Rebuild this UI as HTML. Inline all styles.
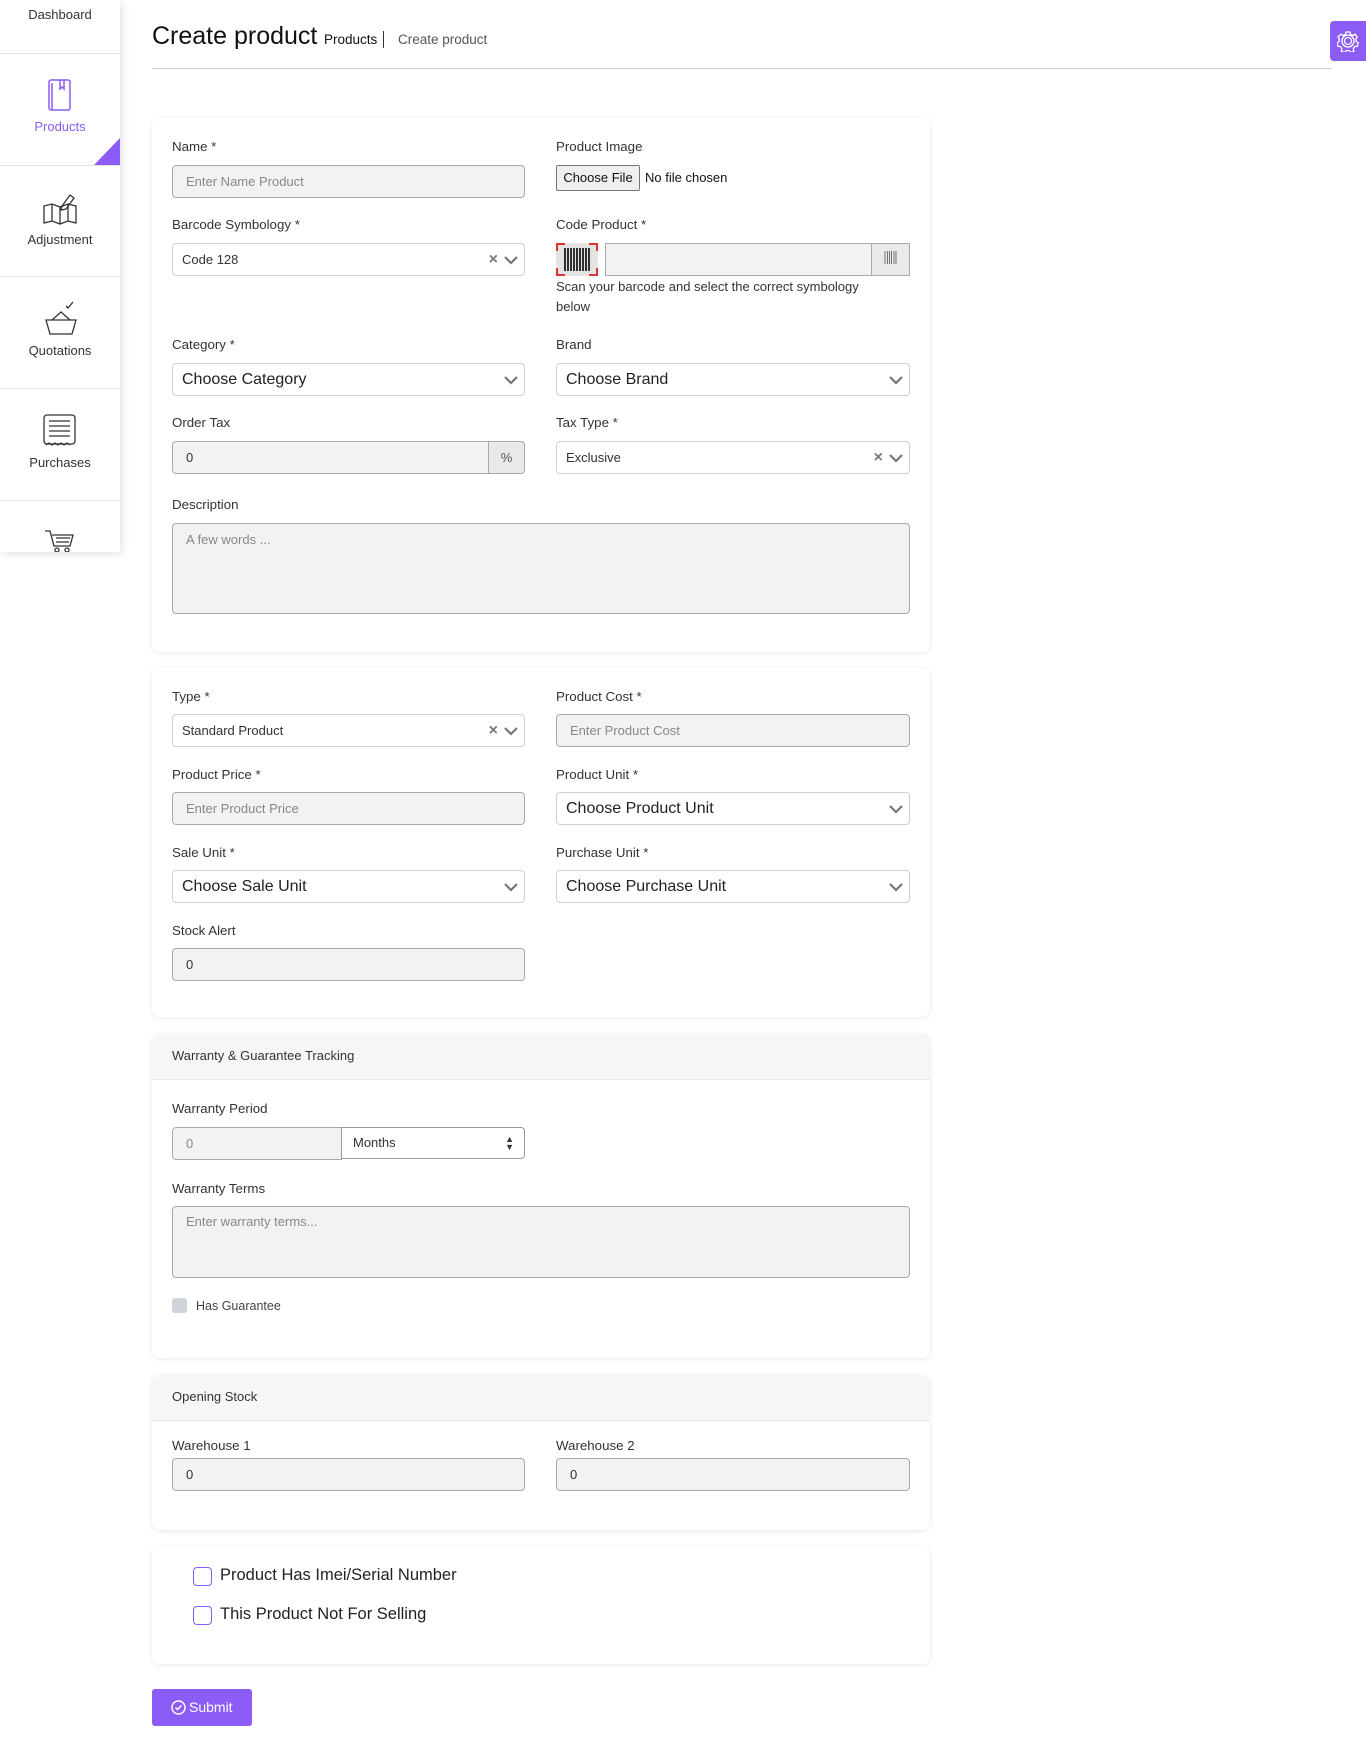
<!DOCTYPE html>
<html><head><meta charset="utf-8"><style>
*{box-sizing:border-box}
body{margin:0;width:1366px;height:1758px;background:#fff;font-family:"Liberation Sans",sans-serif;color:#222;position:relative;overflow:hidden}
.a{position:absolute}
.side{left:0;top:0;width:120px;height:552px;background:#fff;box-shadow:2px 2px 8px rgba(0,0,0,.12)}
.div{position:absolute;left:0;width:120px;height:1px;background:#e3e3e3}
.st{position:absolute;left:0;width:120px;text-align:center;font-size:13px;color:#333}
.card{position:absolute;left:152px;width:778px;background:#fff;border-radius:8px;box-shadow:0 1px 6px rgba(0,0,0,.09)}
.hd{position:absolute;left:0;top:0;width:100%;height:46px;background:#f6f6f6;border-bottom:1px solid #e8e8e8;border-radius:8px 8px 0 0;font-size:13px;padding:14px 20px;color:#333}
.lbl{position:absolute;font-size:13.3px;color:#333}
.inp{position:absolute;height:33px;border:1px solid #a6aab0;border-radius:4px;background:#f1f2f4;font-size:13px;color:#888;padding-left:13px;line-height:31px}
.val{color:#333}
.sel{position:absolute;height:33px;border:1px solid #cfcfcf;border-radius:4px;background:#fff;font-size:13px;color:#333;padding-left:9px;line-height:31px}
.big{font-size:16px;color:#222}
.chev{position:absolute;right:6px;top:9px;width:14px;height:14px}
.x{position:absolute;right:26px;top:0;font-size:16px;color:#777;font-weight:bold}
.cb{position:absolute;width:19px;height:19px;border:1.5px solid #8b5cf6;border-radius:4px;background:#fff}
</style></head><body>

<div class="a side">
 <div class="st" style="top:7px">Dashboard</div>
 <div class="div" style="top:53px"></div>
 <svg class="a" style="left:48px;top:79px" width="24" height="34" viewBox="0 0 24 34" fill="none" stroke="#8b5cf6" stroke-width="1.5"><rect x="1" y="1" width="21" height="30" rx="2"/><path d="M4 31V4M12 1v9l2-2 2 2V1"/></svg>
 <div class="st" style="top:119px;color:#8b5cf6">Products</div>
 <div class="a" style="left:94px;top:138px;width:0;height:0;border-left:26px solid transparent;border-bottom:27px solid #8b5cf6"></div>
 <div class="div" style="top:165px"></div>
 <svg class="a" style="left:42px;top:192px" width="36" height="34" viewBox="0 0 36 34" fill="none" stroke="#333" stroke-width="1.3"><path d="M2 14l8-2 8 3 8-3 8 2v17l-8-2-8 3-8-3-8 2z M10 12v17 M18 15v17 M26 12v17"/><path d="M20 14l8-11 4 3-8 11-5 1z"/></svg>
 <div class="st" style="top:232px">Adjustment</div>
 <div class="div" style="top:276px"></div>
 <svg class="a" style="left:44px;top:300px" width="34" height="36" viewBox="0 0 34 36" fill="none" stroke="#333" stroke-width="1.3"><path d="M2 20h30l-4 14H6z M8 20l9-8 9 8 M22 6l2 2 5-6"/></svg>
 <div class="st" style="top:343px">Quotations</div>
 <div class="div" style="top:388px"></div>
 <svg class="a" style="left:43px;top:414px" width="34" height="34" viewBox="0 0 34 34" fill="none" stroke="#333" stroke-width="1.3"><rect x="1" y="1" width="31" height="29" rx="3"/><path d="M6 7h21M6 12h21M6 17h21M6 22h21M3 31l3-2 3 2 3-2 3 2 3-2 3 2 3-2 3 2"/></svg>
 <div class="st" style="top:455px">Purchases</div>
 <div class="div" style="top:500px"></div>
 <svg class="a" style="left:44px;top:530px" width="32" height="22" viewBox="0 0 32 22" fill="none" stroke="#333" stroke-width="1.3"><path d="M1 1h5l4 15h16l3-11H8M12 8h14M12 12h13"/><circle cx="13" cy="20" r="2"/><circle cx="23" cy="20" r="2"/></svg>
</div>

<div class="a" style="left:152px;top:22px;font-size:25px;color:#111">Create product</div>
<div class="a" style="left:324px;top:32px;font-size:13.5px;color:#111">Products</div>
<div class="a" style="left:383px;top:31px;width:1px;height:17px;background:#333"></div>
<div class="a" style="left:398px;top:32px;font-size:13.5px;color:#555">Create product</div>
<div class="a" style="left:152px;top:68px;width:1180px;height:1px;background:#ccc"></div>
<div class="a" style="left:1330px;top:21px;width:36px;height:40px;background:#8b5cf6;border-radius:4px 0 0 4px"></div>
<svg class="a" style="left:1337px;top:30px" width="22" height="22" viewBox="0 0 22 22" fill="none" stroke="#fff" stroke-width="1.3"><circle cx="11" cy="11" r="3.5"/><circle cx="11" cy="11" r="6"/><path d="M9 2h4l.5 2.5 2.2 1 2.3-1.3 2.3 2.8-1.5 2 .3 2.5 2.2 1.3-1 3.5-2.6.2-1.4 2 .6 2.6-3.4 1.4-1.7-2h-2.4l-1.7 2-3.4-1.4.6-2.6-1.4-2-2.6-.2-1-3.5 2.2-1.3.3-2.5-1.5-2L4 4.2l2.3 1.3 2.2-1z"/></svg>

<!-- Card 1 -->
<div class="card" style="top:118px;height:534px"></div>
<div class="lbl" style="left:172px;top:139px">Name *</div>
<div class="inp" style="left:172px;top:165px;width:353px">Enter Name Product</div>
<div class="lbl" style="left:556px;top:139px">Product Image</div>
<div class="a" style="left:556px;top:165px;width:84px;height:26px;border:1px solid #777;border-radius:2px;background:#efefef;font-size:13px;line-height:24px;text-align:center;color:#111">Choose File</div>
<div class="a" style="left:645px;top:170px;font-size:13px;color:#111">No file chosen</div>

<div class="lbl" style="left:172px;top:217px">Barcode Symbology *</div>
<div class="sel" style="left:172px;top:243px;width:353px">Code 128<span class="x">×</span><svg class="chev" viewBox="0 0 14 14"><path d="M1 4l6 6 6-6" stroke="#777" stroke-width="2.2" fill="none"/></svg></div>
<div class="lbl" style="left:556px;top:217px">Code Product *</div>
<div class="a" style="left:556px;top:243px;width:42px;height:33px;background:#e4e4e4"></div>
<svg class="a" style="left:556px;top:243px" width="42" height="33" viewBox="0 0 42 33" fill="none" stroke="#d33" stroke-width="2"><path d="M1 8V1h8M33 1h8v7M1 25v7h8M33 32h8v-7"/></svg>
<svg class="a" style="left:563px;top:248px" width="28" height="23" viewBox="0 0 28 23"><path d="M2 0v23M5 0v23M8 0v23M11 0v23M14 0v23M17 0v23M20 0v23M23 0v23M26 0v23" stroke="#111" stroke-width="1.7"/></svg>
<div class="a" style="left:605px;top:243px;width:267px;height:33px;background:#f1f2f4;border:1px solid #aaa"></div>
<div class="a" style="left:871px;top:243px;width:39px;height:33px;background:#e9e9e9;border:1px solid #aaa"></div>
<svg class="a" style="left:884px;top:251px" width="13" height="13" viewBox="0 0 13 13"><path d="M1 0v13M3.5 0v13M5.5 0v13M7.5 0v13M10 0v13M12 0v13" stroke="#666" stroke-width="0.9"/></svg>
<div class="a" style="left:556px;top:277px;width:330px;font-size:13px;line-height:20px;color:#333">Scan your barcode and select the correct symbology below</div>

<div class="lbl" style="left:172px;top:337px">Category *</div>
<div class="sel big" style="left:172px;top:363px;width:353px">Choose Category<svg class="chev" viewBox="0 0 14 14"><path d="M1 4l6 6 6-6" stroke="#777" stroke-width="2.2" fill="none"/></svg></div>
<div class="lbl" style="left:556px;top:337px">Brand</div>
<div class="sel big" style="left:556px;top:363px;width:354px">Choose Brand<svg class="chev" viewBox="0 0 14 14"><path d="M1 4l6 6 6-6" stroke="#777" stroke-width="2.2" fill="none"/></svg></div>

<div class="lbl" style="left:172px;top:415px">Order Tax</div>
<div class="inp val" style="left:172px;top:441px;width:353px">0</div>
<div class="a" style="left:488px;top:441px;width:37px;height:33px;background:#e9e9e9;border:1px solid #a6aab0;border-radius:0 4px 4px 0;font-size:13px;line-height:31px;text-align:center;color:#555">%</div>
<div class="lbl" style="left:556px;top:415px">Tax Type *</div>
<div class="sel" style="left:556px;top:441px;width:354px">Exclusive<span class="x">×</span><svg class="chev" viewBox="0 0 14 14"><path d="M1 4l6 6 6-6" stroke="#777" stroke-width="2.2" fill="none"/></svg></div>

<div class="lbl" style="left:172px;top:497px">Description</div>
<div class="inp" style="left:172px;top:523px;width:738px;height:91px;line-height:18px;padding-top:7px">A few words ...</div>

<!-- Card 2 -->
<div class="card" style="top:668px;height:349px"></div>
<div class="lbl" style="left:172px;top:689px">Type *</div>
<div class="sel" style="left:172px;top:714px;width:353px">Standard Product<span class="x">×</span><svg class="chev" viewBox="0 0 14 14"><path d="M1 4l6 6 6-6" stroke="#777" stroke-width="2.2" fill="none"/></svg></div>
<div class="lbl" style="left:556px;top:689px">Product Cost *</div>
<div class="inp" style="left:556px;top:714px;width:354px">Enter Product Cost</div>
<div class="lbl" style="left:172px;top:767px">Product Price *</div>
<div class="inp" style="left:172px;top:792px;width:353px">Enter Product Price</div>
<div class="lbl" style="left:556px;top:767px">Product Unit *</div>
<div class="sel big" style="left:556px;top:792px;width:354px">Choose Product Unit<svg class="chev" viewBox="0 0 14 14"><path d="M1 4l6 6 6-6" stroke="#777" stroke-width="2.2" fill="none"/></svg></div>
<div class="lbl" style="left:172px;top:845px">Sale Unit *</div>
<div class="sel big" style="left:172px;top:870px;width:353px">Choose Sale Unit<svg class="chev" viewBox="0 0 14 14"><path d="M1 4l6 6 6-6" stroke="#777" stroke-width="2.2" fill="none"/></svg></div>
<div class="lbl" style="left:556px;top:845px">Purchase Unit *</div>
<div class="sel big" style="left:556px;top:870px;width:354px">Choose Purchase Unit<svg class="chev" viewBox="0 0 14 14"><path d="M1 4l6 6 6-6" stroke="#777" stroke-width="2.2" fill="none"/></svg></div>
<div class="lbl" style="left:172px;top:923px">Stock Alert</div>
<div class="inp val" style="left:172px;top:948px;width:353px">0</div>

<!-- Card 3 -->
<div class="card" style="top:1034px;height:324px"><div class="hd">Warranty &amp; Guarantee Tracking</div></div>
<div class="lbl" style="left:172px;top:1101px">Warranty Period</div>
<div class="inp" style="left:172px;top:1127px;width:170px;border-radius:4px 0 0 4px">0</div>
<div class="a" style="left:341px;top:1127px;width:184px;height:32px;border:1px solid #999;border-radius:0 4px 4px 0;font-size:13px;line-height:30px;padding-left:11px;color:#333">Months<span style="position:absolute;right:10px;top:0;font-size:9px;line-height:8px;padding-top:7px">▲<br>▼</span></div>
<div class="lbl" style="left:172px;top:1181px">Warranty Terms</div>
<div class="inp" style="left:172px;top:1206px;width:738px;height:72px;line-height:18px;padding-top:6px">Enter warranty terms...</div>
<div class="a" style="left:172px;top:1298px;width:15px;height:15px;background:#d0d3d9;border-radius:3px"></div>
<div class="a" style="left:196px;top:1299px;font-size:12.5px;color:#444">Has Guarantee</div>

<!-- Card 4 -->
<div class="card" style="top:1375px;height:155px"><div class="hd">Opening Stock</div></div>
<div class="lbl" style="left:172px;top:1438px">Warehouse 1</div>
<div class="inp val" style="left:172px;top:1458px;width:353px">0</div>
<div class="lbl" style="left:556px;top:1438px">Warehouse 2</div>
<div class="inp val" style="left:556px;top:1458px;width:354px">0</div>

<!-- Card 5 -->
<div class="card" style="top:1547px;height:117px"></div>
<div class="cb" style="left:193px;top:1567px"></div>
<div class="a" style="left:220px;top:1566px;font-size:16.5px;color:#222">Product Has Imei/Serial Number</div>
<div class="cb" style="left:193px;top:1606px"></div>
<div class="a" style="left:220px;top:1605px;font-size:16.5px;color:#222">This Product Not For Selling</div>

<div class="a" style="left:152px;top:1689px;width:100px;height:37px;background:#8b5cf6;border-radius:3px;color:#fff;font-size:14px;line-height:37px;padding-left:37px">Submit</div>
<svg class="a" style="left:171px;top:1700px" width="15" height="15" viewBox="0 0 15 15" fill="none" stroke="#fff" stroke-width="1.5"><circle cx="7.5" cy="7.5" r="6.5"/><path d="M4.5 7.5l2 2 4-4"/></svg>
</body></html>
